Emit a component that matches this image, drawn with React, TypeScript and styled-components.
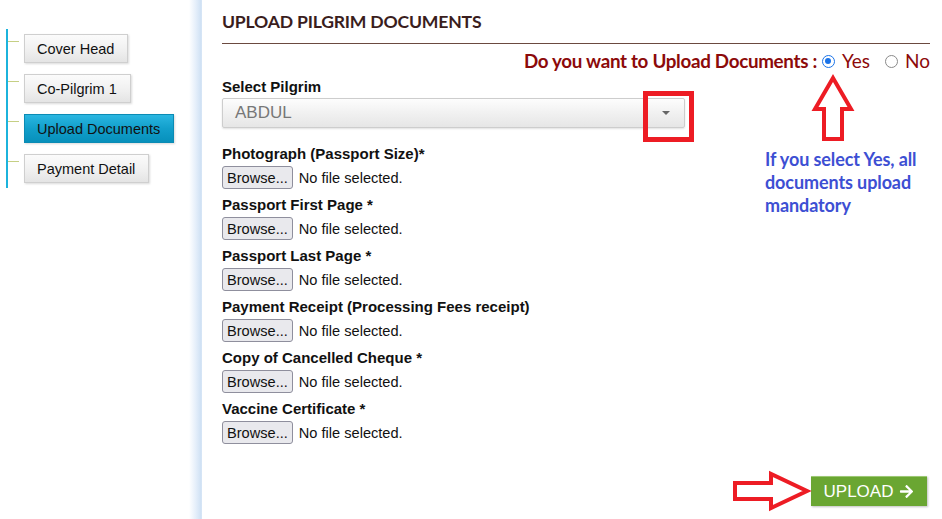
import React from 'react';
import styled, { createGlobalStyle } from 'styled-components';
import { FaArrowRight } from 'react-icons/fa';

const GlobalStyle = createGlobalStyle`
  html, body { margin: 0; padding: 0; background: #fff; }
  body { font-family: "Liberation Sans", Arial, sans-serif; }
`;

const Page = styled.div`
  position: relative;
  display: flex;
  width: 942px;
  height: 519px;
  overflow: hidden;
`;

const Sidebar = styled.div`
  width: 202px;
  flex-shrink: 0;
  padding: 29px 0 0 6px;
  box-sizing: border-box;
  background: linear-gradient(to right, #fff 0, #fff 189px, #e4eefa 196px, #cfe1f4 201px, #dbe8f7 202px);
`;

const Tree = styled.div`
  border-left: 2px solid #1cb3dc;
  padding: 5px 0 5px 0;
  display: flex;
  flex-direction: column;
  gap: 11px;
`;

const TreeItem = styled.div`
  position: relative;
  padding-left: 16px;
  display: flex;
  &::before {
    content: '';
    position: absolute;
    left: 0;
    top: 7px;
    width: 11px;
    height: 1px;
    background: #c5cf84;
  }
`;

const NavButton = styled.div<{ $active?: boolean }>`
  height: 29px;
  box-sizing: border-box;
  padding: 0 13px 0 12px;
  display: flex;
  align-items: center;
  font-size: 14.5px;
  color: #111;
  border: 1px solid ${(p) => (p.$active ? '#0b8bb4' : '#cfcfcf')};
  background: ${(p) =>
    p.$active
      ? 'linear-gradient(to bottom, #2ab6e1 0%, #129fcb 50%, #0790bb 100%)'
      : 'linear-gradient(to bottom, #fbfbfb 0%, #efefef 60%, #e4e4e4 100%)'};
  box-shadow: 1px 1px 2px rgba(0, 0, 0, 0.15);
`;

const Main = styled.div`
  flex: 1;
  padding: 0 12px 0 20px;
  display: flex;
  flex-direction: column;
`;

const Title = styled.h2`
  margin: 0;
  padding: 12px 0 11px;
  line-height: 20px;
  font-family: Lato, "Open Sans", sans-serif;
  font-weight: 700;
  font-size: 17.6px;
  letter-spacing: -0.2px;
  color: #3a1d1d;
  border-bottom: 1px solid #6b4a40;
`;

const Question = styled.div`
  margin-top: 6px;
  display: flex;
  justify-content: flex-end;
  align-items: center;
  line-height: 22px;
  font-family: Lato, "Open Sans", sans-serif;
  color: #8c0a0a;
`;

const QuestionText = styled.span`
  font-weight: 700;
  font-size: 18.8px;
  letter-spacing: -0.3px;
  margin-right: 1px;
`;

const RadioLabel = styled.label`
  display: flex;
  align-items: center;
  font-size: 19px;
  margin-left: 4px;
  & + & { margin-left: 15px; }
`;

const RadioDot = styled.span<{ $checked?: boolean }>`
  width: 13px;
  height: 13px;
  border-radius: 50%;
  box-sizing: border-box;
  border: 1.5px solid ${(p) => (p.$checked ? '#1a73e8' : '#8a8a8a')};
  margin-right: 7px;
  display: flex;
  align-items: center;
  justify-content: center;
  &::after {
    content: '';
    width: 6px;
    height: 6px;
    border-radius: 50%;
    background: ${(p) => (p.$checked ? '#1a73e8' : 'transparent')};
  }
`;

const FieldLabel = styled.div<{ $top?: number }>`
  margin-top: ${(p) => p.$top ?? 0}px;
  line-height: 20px;
  font-size: 15px;
  font-weight: 700;
  color: #111;
`;

const SelectBox = styled.div`
  margin-top: 1px;
  width: 463px;
  height: 30px;
  box-sizing: border-box;
  border: 1px solid #cdcdcd;
  border-radius: 2px;
  background: linear-gradient(to bottom, #fdfdfd 0%, #f1f1f1 50%, #e6e6e6 100%);
  box-shadow: 0 1px 2px rgba(0, 0, 0, 0.12);
  display: flex;
  align-items: center;
  justify-content: space-between;
  padding: 0 14px 0 12px;
  font-size: 17px;
  color: #777;
`;

const Caret = styled.span`
  width: 0;
  height: 0;
  border-left: 4px solid transparent;
  border-right: 4px solid transparent;
  border-top: 4px solid #666;
`;

const Fields = styled.div`
  margin-top: 16px;
  display: flex;
  flex-direction: column;
`;

const FileRow = styled.div`
  margin-top: 2px;
  margin-bottom: 6px;
  display: flex;
  align-items: center;
  font-size: 14.6px;
  color: #111;
`;

const BrowseButton = styled.span`
  height: 23px;
  box-sizing: border-box;
  padding: 0 4px;
  display: flex;
  align-items: center;
  border: 1px solid #8f8f9d;
  border-radius: 3px;
  background: #e9e9ed;
  font-size: 14.6px;
  color: #111;
  margin-right: 6px;
`;

const Footer = styled.div`
  margin-top: 26px;
  display: flex;
  justify-content: flex-end;
  padding-right: 3px;
`;

const UploadButton = styled.div`
  height: 30px;
  width: 116px;
  box-sizing: border-box;
  display: flex;
  align-items: center;
  justify-content: center;
  gap: 6px;
  background: #6aa632;
  border-top: 1px solid #9cc873;
  box-shadow: 1px 1px 2px rgba(0, 0, 0, 0.25);
  color: #fff;
  font-size: 17px;
`;

const Note = styled.div`
  position: absolute;
  left: 765px;
  top: 148px;
  width: 176px;
  font-family: Lato, "Open Sans", sans-serif;
  font-weight: 700;
  font-size: 18px;
  line-height: 23px;
  letter-spacing: -0.1px;
  color: #3d4fd3;
`;

const Annotations = styled.svg`
  position: absolute;
  left: 0;
  top: 0;
  pointer-events: none;
`;

const navItems = ['Cover Head', 'Co-Pilgrim 1', 'Upload Documents', 'Payment Detail'];

const docs = [
  'Photograph (Passport Size)*',
  'Passport First Page *',
  'Passport Last Page *',
  'Payment Receipt (Processing Fees receipt)',
  'Copy of Cancelled Cheque *',
  'Vaccine Certificate *',
];

const App = () => {
  return (
    <Page>
      <GlobalStyle />
      <Sidebar>
        <Tree>
          {navItems.map((n) => (
            <TreeItem key={n}>
              <NavButton $active={n === 'Upload Documents'}>{n}</NavButton>
            </TreeItem>
          ))}
        </Tree>
      </Sidebar>

      <Main>
        <Title>UPLOAD PILGRIM DOCUMENTS</Title>
        <Question>
          <QuestionText>Do you want to Upload Documents :</QuestionText>
          <RadioLabel>
            <RadioDot $checked />
            Yes
          </RadioLabel>
          <RadioLabel>
            <RadioDot />
            No
          </RadioLabel>
        </Question>

        <FieldLabel $top={5}>Select Pilgrim</FieldLabel>
        <SelectBox>
          ABDUL
          <Caret />
        </SelectBox>

        <Fields>
          {docs.map((d) => (
            <div key={d}>
              <FieldLabel>{d}</FieldLabel>
              <FileRow>
                <BrowseButton>Browse...</BrowseButton>
                No file selected.
              </FileRow>
            </div>
          ))}
        </Fields>

        <Footer>
          <UploadButton>
            UPLOAD <FaArrowRight size={15} />
          </UploadButton>
        </Footer>
      </Main>

      <Note>If you select Yes, all documents upload mandatory</Note>

      <Annotations width="942" height="519" viewBox="0 0 942 519">
        <rect x="645.5" y="93.5" width="46" height="46" fill="none" stroke="#ed1c24" strokeWidth="5" />
        <polygon
          points="833,78 851,109 842,109 842,139 824,139 824,109 815,109"
          fill="#fff"
          stroke="#ed1c24"
          strokeWidth="4"
          strokeLinejoin="miter"
        />
        <polygon
          points="735,483 771,483 771,474 807,491 771,508 771,499 735,499"
          fill="#fff"
          stroke="#ed1c24"
          strokeWidth="4"
          strokeLinejoin="miter"
        />
      </Annotations>
    </Page>
  );
};

export default App;
